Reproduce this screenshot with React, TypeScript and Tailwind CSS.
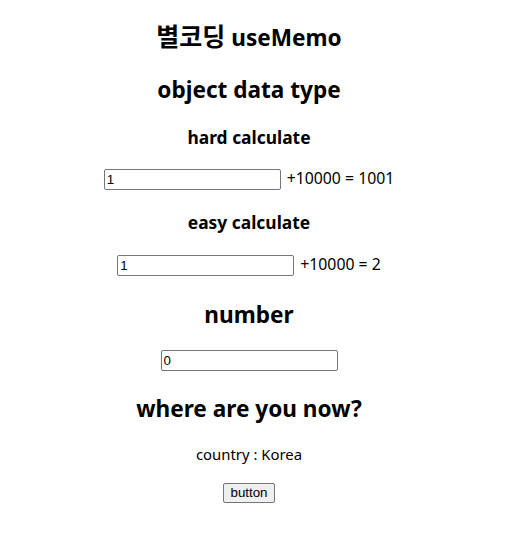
import React from "react";

const inputCls =
  "w-[177px] h-[21px] border border-[#767676] rounded-[2px] px-[2px] py-[1px] text-[13.33px] leading-[17px] text-black bg-white align-middle [font-family:'Liberation_Sans',Arial,sans-serif] outline-none";

export default function App() {
  return (
    <div className="w-[498px] bg-white text-black text-center [font-family:'Noto_Sans','Noto_Sans_CJK_KR',sans-serif]">
      <div className="h-[22px]" />
      <h1 className="h-[32px] text-[22.6px] font-bold leading-[32px]">
        <span className="text-[25px] leading-[0] [font-family:'Noto_Sans_CJK_KR','Noto_Sans',sans-serif]">별코딩</span> useMemo
      </h1>
      <h2 className="mt-[20px] text-[22.6px] font-bold leading-[32px]">object data type</h2>
      <h3 className="mt-[19px] text-[17.4px] font-bold leading-[25px]">hard calculate</h3>
      <div className="mt-[18px] h-[22px] flex items-center justify-center text-[15.8px]">
        <input className={inputCls} defaultValue="1" />
        <span className="ml-[6px]">+10000 = 1001</span>
      </div>
      <h3 className="mt-[20px] text-[17.4px] font-bold leading-[25px]">easy calculate</h3>
      <div className="mt-[19px] h-[22px] flex items-center justify-center text-[15.8px]">
        <input className={inputCls} defaultValue="1" />
        <span className="ml-[6px]">+10000 = 2</span>
      </div>
      <h2 className="mt-[23px] text-[22.6px] font-bold leading-[32px]">number</h2>
      <div className="mt-[18px] h-[22px] flex items-center justify-center">
        <input className={inputCls} defaultValue="0" />
      </div>
      <h2 className="mt-[22px] text-[22.6px] font-bold leading-[32px]">where are you now?</h2>
      <p className="mt-[19px] text-[14.9px] leading-[21px]">country : Korea</p>
      <div className="mt-[18px] flex justify-center">
        <button className="h-[20px] px-[6px] border border-[#767676] rounded-[2px] bg-[#efefef] text-[13.33px] leading-[16px] [font-family:'Liberation_Sans',Arial,sans-serif]">
          button
        </button>
      </div>
      <div className="h-[40px]" />
    </div>
  );
}
